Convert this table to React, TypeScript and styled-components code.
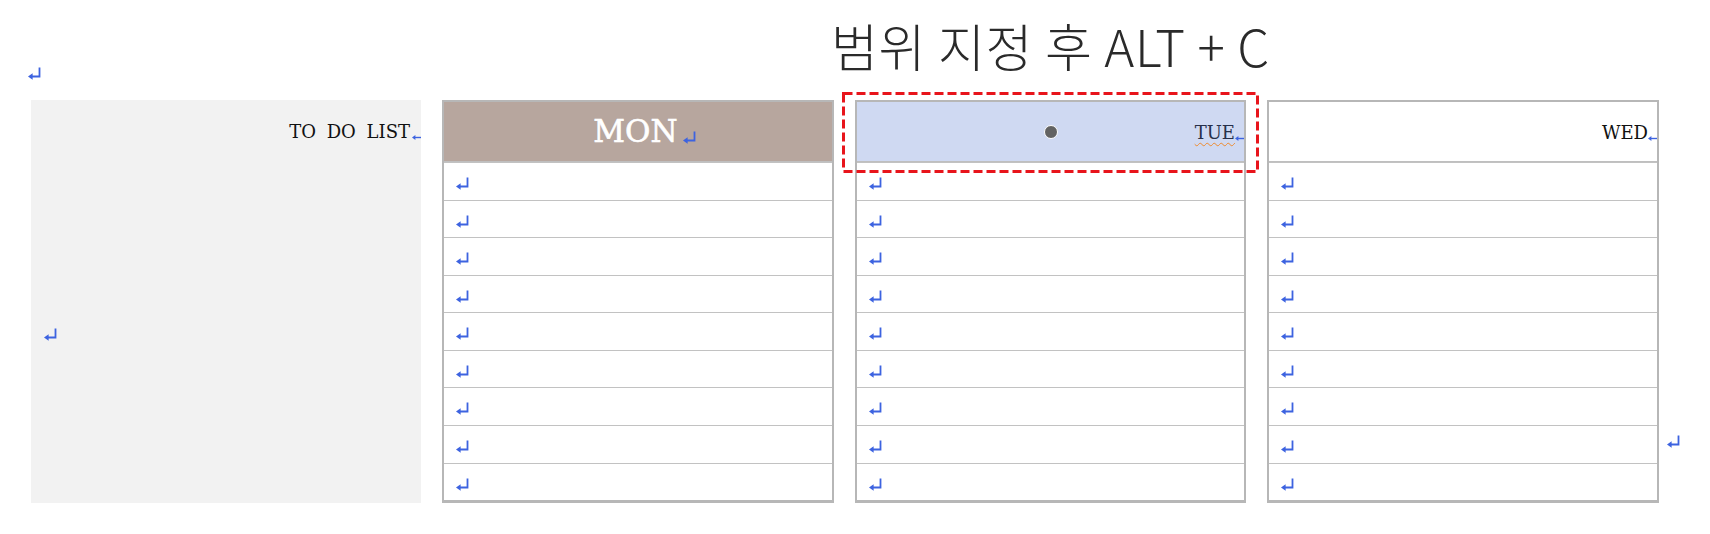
import styled, { createGlobalStyle } from 'styled-components'

const GlobalStyle = createGlobalStyle`
  body {
    margin: 0;
    background: #ffffff;
    font-family: 'DejaVu Serif', serif;
  }
`

const MARK_BLUE = '#3d63e0'

function ReturnMark() {
  return (
    <MarkSvg width='13' height='14' viewBox='0 0 13 14'>
      <path d='M11.5 0.5 V9.5 H4' fill='none' stroke={MARK_BLUE} strokeWidth='1.8' />
      <polygon points='0,9.5 4.6,6.2 4.6,12.8' fill={MARK_BLUE} />
    </MarkSvg>
  )
}

function TinyMark() {
  return (
    <TinySvg width='9' height='7' viewBox='0 0 9 7'>
      <path d='M9 3.5 H3' fill='none' stroke={MARK_BLUE} strokeWidth='1.4' />
      <polygon points='0,3.5 3.4,1 3.4,6' fill={MARK_BLUE} />
    </TinySvg>
  )
}

type TDay = {
  label: string
  bg: string
  color: string
  align: 'center' | 'flex-end'
  big?: boolean
  typo?: boolean
  pointer?: boolean
}

const days: TDay[] = [
  { label: 'MON', bg: '#b7a69e', color: '#ffffff', align: 'center', big: true },
  { label: 'TUE', bg: '#cfd9f2', color: '#27304a', align: 'flex-end', typo: true, pointer: true },
  { label: 'WED', bg: '#ffffff', color: '#111111', align: 'flex-end' },
]

const ROWS = 9

function DayTable({ day }: { day: TDay }) {
  return (
    <Table>
      <Header $bg={day.bg} $align={day.align} $big={day.big}>
        <HeadText $color={day.color} $big={day.big} $typo={day.typo}>
          {day.label}
        </HeadText>
        {day.big ? (
          <HangMark>
            <ReturnMark />
          </HangMark>
        ) : (
          <TinyMark />
        )}
        {day.pointer && <Pointer />}
      </Header>
      {Array.from({ length: ROWS }).map((_, i) => (
        <Row key={i}>
          <ReturnMark />
        </Row>
      ))}
    </Table>
  )
}

export default function App() {
  return (
    <>
      <GlobalStyle />
      <Sheet>
        <TopMark>
          <ReturnMark />
        </TopMark>
        <Title>
          <span>범위 지정 후 ALT + C</span>
        </Title>

        <ListPanel>
          <ListTitle>
            TO DO LIST
            <TinyMark />
          </ListTitle>
          <PanelMark>
            <ReturnMark />
          </PanelMark>
        </ListPanel>

        <DayTable day={days[0]} />
        <Selected>
          <DayTable day={days[1]} />
          <SelectionBox width='417' height='81' viewBox='0 0 417 81'>
            <rect
              x='1.5'
              y='1.5'
              width='414'
              height='78'
              fill='none'
              stroke='#e8141b'
              strokeWidth='3'
              strokeDasharray='9 4'
            />
          </SelectionBox>
        </Selected>
        <DayTable day={days[2]} />

        <EndMark>
          <ReturnMark />
        </EndMark>
      </Sheet>
    </>
  )
}

const MarkSvg = styled.svg`
  display: block;
`

const TinySvg = styled.svg`
  display: inline-block;
  flex-shrink: 0;
  margin-top: 11px;
`

const Sheet = styled.div`
  display: grid;
  grid-template-columns: 390px 392px 391px 392px auto;
  grid-template-rows: 100px 403px;
  column-gap: 21px;
  padding-left: 31px;
`

const TopMark = styled.div`
  grid-column: 1;
  grid-row: 1;
  padding-top: 67px;
  margin-left: -3px;
`

const Title = styled.div`
  grid-column: 3;
  grid-row: 1;
  display: flex;
  justify-content: center;
  padding-top: 20px;
  white-space: nowrap;
  font-family: 'Noto Sans CJK KR', 'Noto Sans', sans-serif;
  font-weight: 300;
  font-size: 51px;
  letter-spacing: 0.6px;
  line-height: 1;
  color: #2a2a2a;
`

const ListPanel = styled.div`
  grid-row: 2;
  display: flex;
  flex-direction: column;
  background: #f2f2f2;
  padding: 23px 0 0 13px;
`

const ListTitle = styled.div`
  display: flex;
  justify-content: flex-end;
  align-items: flex-start;
  gap: 2px;
  font-size: 18px;
  line-height: 1;
  word-spacing: 5px;
  color: #111111;
`

const PanelMark = styled.div`
  margin-top: 187px;
`

const Table = styled.div`
  grid-row: 2;
  display: flex;
  flex-direction: column;
  height: 403px;
  box-sizing: border-box;
  border: 2px solid #b7b7b7;
  border-bottom-width: 3px;
  background: #ffffff;
`

const Header = styled.div<{ $bg: string; $align: string; $big?: boolean }>`
  position: relative;
  display: flex;
  justify-content: ${p => p.$align};
  align-items: flex-start;
  height: 60px;
  flex-shrink: 0;
  box-sizing: border-box;
  padding-top: ${p => (p.$big ? '14px' : '22px')};
  background: ${p => p.$bg};
  border-bottom: 1px solid #bfbfbf;
`

const HeadText = styled.span<{ $color: string; $big?: boolean; $typo?: boolean }>`
  font-size: ${p => (p.$big ? '31px' : '18px')};
  line-height: 1;
  color: ${p => p.$color};
  -webkit-text-stroke: ${p => (p.$big ? '0.6px' : '0')} ${p => p.$color};
  text-decoration: ${p => (p.$typo ? 'underline wavy #ee8a2c' : 'none')};
  text-decoration-thickness: 1px;
  text-underline-offset: 3px;
`

const HangMark = styled.span`
  width: 0;
  margin-top: 15px;
  padding-left: 5px;
`

const Pointer = styled.span`
  position: absolute;
  left: 50%;
  top: 50%;
  width: 12px;
  height: 12px;
  transform: translate(-50%, -50%);
  border-radius: 50%;
  background: #626262;
  border: 1.5px solid #ffffff;
`

const Row = styled.div`
  flex: 1;
  padding: 14px 0 0 12px;
  border-top: 1px solid #c2c2c2;

  &:first-of-type {
    border-top: none;
  }
`

const Selected = styled.div`
  grid-row: 2;
  position: relative;
  display: flex;
  flex-direction: column;
`

const SelectionBox = styled.svg`
  position: absolute;
  left: -13px;
  top: -8px;
  pointer-events: none;
`

const EndMark = styled.div`
  grid-column: 5;
  grid-row: 2;
  align-self: end;
  margin-left: -13px;
  margin-bottom: 54px;
`
